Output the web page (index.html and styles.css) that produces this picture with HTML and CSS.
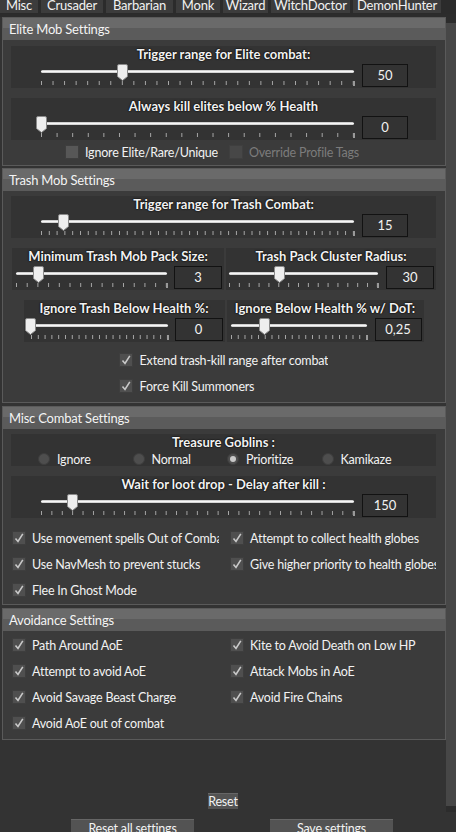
FILE: index.html
```html
<!DOCTYPE html>
<html>
<head>
<meta charset="utf-8">
<link rel="stylesheet" href="styles.css">
</head>
<body>
<div class="tabs">
  <div class="tab t1"><span>Misc</span></div>
  <div class="tab t2"><span>Crusader</span></div>
  <div class="tab t3"><span>Barbarian</span></div>
  <div class="tab t4"><span>Monk</span></div>
  <div class="tab t5"><span>Wizard</span></div>
  <div class="tab t6"><span>WitchDoctor</span></div>
  <div class="tab t7"><span>DemonHunter</span></div>
</div>
<div class="main">
  <div class="scroll">
    <section class="group g1">
      <div class="ghead">Elite Mob Settings</div>
      <div class="gbody">
        <div class="panel">
          <div class="plabel">Trigger range for Elite combat:</div>
          <div class="prow full">
            <div class="slider" style="--n:27"><i class="track"></i><i class="ticks"></i><svg class="thumb" style="left:76px" width="11" height="17" viewBox="0 0 11 17"><path d="M2 .5h7a1.5 1.5 0 0 1 1.5 1.5v10.5L5.5 16.5.5 12.5V2A1.5 1.5 0 0 1 2 .5z"/></svg></div>
            <div class="val">50</div>
          </div>
        </div>
        <div class="panel">
          <div class="plabel">Always kill elites below % Health</div>
          <div class="prow full">
            <div class="slider" style="--n:20"><i class="track"></i><i class="ticks"></i><svg class="thumb" style="left:-5px" width="11" height="17" viewBox="0 0 11 17"><path d="M2 .5h7a1.5 1.5 0 0 1 1.5 1.5v10.5L5.5 16.5.5 12.5V2A1.5 1.5 0 0 1 2 .5z"/></svg></div>
            <div class="val">0</div>
          </div>
        </div>
        <div class="cbpair">
          <label class="cb off"><span class="box"></span>Ignore Elite/Rare/Unique</label>
          <label class="cb disabled"><span class="box"></span>Override Profile Tags</label>
        </div>
      </div>
    </section>

    <section class="group g2">
      <div class="ghead">Trash Mob Settings</div>
      <div class="gbody">
        <div class="panel">
          <div class="plabel">Trigger range for Trash Combat:</div>
          <div class="prow full">
            <div class="slider" style="--n:40"><i class="track"></i><i class="ticks"></i><svg class="thumb" style="left:17px" width="11" height="17" viewBox="0 0 11 17"><path d="M2 .5h7a1.5 1.5 0 0 1 1.5 1.5v10.5L5.5 16.5.5 12.5V2A1.5 1.5 0 0 1 2 .5z"/></svg></div>
            <div class="val">15</div>
          </div>
        </div>
        <div class="halfrow r1">
          <div class="panel half h1">
            <div class="plabel">Minimum Trash Mob Pack Size:</div>
            <div class="prow">
              <div class="slider" style="--n:14"><i class="track"></i><i class="ticks"></i><svg class="thumb" style="left:17px" width="11" height="17" viewBox="0 0 11 17"><path d="M2 .5h7a1.5 1.5 0 0 1 1.5 1.5v10.5L5.5 16.5.5 12.5V2A1.5 1.5 0 0 1 2 .5z"/></svg></div>
              <div class="val">3</div>
            </div>
          </div>
          <div class="panel half h2">
            <div class="plabel">Trash Pack Cluster Radius:</div>
            <div class="prow">
              <div class="slider" style="--n:15"><i class="track"></i><i class="ticks"></i><svg class="thumb" style="left:45px" width="11" height="17" viewBox="0 0 11 17"><path d="M2 .5h7a1.5 1.5 0 0 1 1.5 1.5v10.5L5.5 16.5.5 12.5V2A1.5 1.5 0 0 1 2 .5z"/></svg></div>
              <div class="val">30</div>
            </div>
          </div>
        </div>
        <div class="halfrow r2">
          <div class="panel half h3">
            <div class="plabel">Ignore Trash Below Health %:</div>
            <div class="prow">
              <div class="slider" style="--n:20"><i class="track"></i><i class="ticks"></i><svg class="thumb" style="left:-6px" width="11" height="17" viewBox="0 0 11 17"><path d="M2 .5h7a1.5 1.5 0 0 1 1.5 1.5v10.5L5.5 16.5.5 12.5V2A1.5 1.5 0 0 1 2 .5z"/></svg></div>
              <div class="val">0</div>
            </div>
          </div>
          <div class="panel half h4">
            <div class="plabel">Ignore Below Health % w/ DoT:</div>
            <div class="prow">
              <div class="slider" style="--n:20"><i class="track"></i><i class="ticks"></i><svg class="thumb" style="left:28px" width="11" height="17" viewBox="0 0 11 17"><path d="M2 .5h7a1.5 1.5 0 0 1 1.5 1.5v10.5L5.5 16.5.5 12.5V2A1.5 1.5 0 0 1 2 .5z"/></svg></div>
              <div class="val">0,25</div>
            </div>
          </div>
        </div>
        <div class="cbstack">
          <label class="cb"><span class="box"><svg width="12" height="12" viewBox="0 0 12 12"><path d="M2.5 6.5 5 9.5 9.8 1.8"/></svg></span>Extend trash-kill range after combat</label>
          <label class="cb"><span class="box"><svg width="12" height="12" viewBox="0 0 12 12"><path d="M2.5 6.5 5 9.5 9.8 1.8"/></svg></span>Force Kill Summoners</label>
        </div>
      </div>
    </section>

    <section class="group g3">
      <div class="ghead">Misc Combat Settings</div>
      <div class="gbody">
        <div class="panel goblins">
          <div class="plabel">Treasure Goblins :</div>
          <div class="radios">
            <label class="rb"><span class="dot"></span>Ignore</label>
            <label class="rb"><span class="dot"></span>Normal</label>
            <label class="rb on"><span class="dot"></span>Prioritize</label>
            <label class="rb"><span class="dot"></span>Kamikaze</label>
          </div>
        </div>
        <div class="panel">
          <div class="plabel">Wait for loot drop - Delay after kill :</div>
          <div class="prow full">
            <div class="slider" style="--n:30"><i class="track"></i><i class="ticks"></i><svg class="thumb" style="left:26px" width="11" height="17" viewBox="0 0 11 17"><path d="M2 .5h7a1.5 1.5 0 0 1 1.5 1.5v10.5L5.5 16.5.5 12.5V2A1.5 1.5 0 0 1 2 .5z"/></svg></div>
            <div class="val">150</div>
          </div>
        </div>
        <div class="cbgrid">
          <label class="cb"><span class="box"><svg width="12" height="12" viewBox="0 0 12 12"><path d="M2.5 6.5 5 9.5 9.8 1.8"/></svg></span>Use movement spells Out of Combat</label>
          <label class="cb"><span class="box"><svg width="12" height="12" viewBox="0 0 12 12"><path d="M2.5 6.5 5 9.5 9.8 1.8"/></svg></span>Attempt to collect health globes</label>
          <label class="cb"><span class="box"><svg width="12" height="12" viewBox="0 0 12 12"><path d="M2.5 6.5 5 9.5 9.8 1.8"/></svg></span>Use NavMesh to prevent stucks</label>
          <label class="cb"><span class="box"><svg width="12" height="12" viewBox="0 0 12 12"><path d="M2.5 6.5 5 9.5 9.8 1.8"/></svg></span>Give higher priority to health globes</label>
          <label class="cb"><span class="box"><svg width="12" height="12" viewBox="0 0 12 12"><path d="M2.5 6.5 5 9.5 9.8 1.8"/></svg></span>Flee In Ghost Mode</label>
        </div>
      </div>
    </section>

    <section class="group g4">
      <div class="ghead">Avoidance Settings</div>
      <div class="gbody">
        <div class="cbgrid">
          <label class="cb"><span class="box"><svg width="12" height="12" viewBox="0 0 12 12"><path d="M2.5 6.5 5 9.5 9.8 1.8"/></svg></span>Path Around AoE</label>
          <label class="cb"><span class="box"><svg width="12" height="12" viewBox="0 0 12 12"><path d="M2.5 6.5 5 9.5 9.8 1.8"/></svg></span>Kite to Avoid Death on Low HP</label>
          <label class="cb"><span class="box"><svg width="12" height="12" viewBox="0 0 12 12"><path d="M2.5 6.5 5 9.5 9.8 1.8"/></svg></span>Attempt to avoid AoE</label>
          <label class="cb"><span class="box"><svg width="12" height="12" viewBox="0 0 12 12"><path d="M2.5 6.5 5 9.5 9.8 1.8"/></svg></span>Attack Mobs in AoE</label>
          <label class="cb"><span class="box"><svg width="12" height="12" viewBox="0 0 12 12"><path d="M2.5 6.5 5 9.5 9.8 1.8"/></svg></span>Avoid Savage Beast Charge</label>
          <label class="cb"><span class="box"><svg width="12" height="12" viewBox="0 0 12 12"><path d="M2.5 6.5 5 9.5 9.8 1.8"/></svg></span>Avoid Fire Chains</label>
          <label class="cb"><span class="box"><svg width="12" height="12" viewBox="0 0 12 12"><path d="M2.5 6.5 5 9.5 9.8 1.8"/></svg></span>Avoid AoE out of combat</label>
        </div>
      </div>
    </section>

    <div class="spacer"></div>
    <div class="resetrow"><button class="btn small">Reset</button></div>
  </div>
  <div class="sbar">
    <div class="arrow up"></div>
    <div class="sthumb"></div>
    <div class="arrow down"></div>
  </div>
</div>
<div class="footer">
  <button class="btn wide">Reset all settings</button>
  <button class="btn wide">Save settings</button>
</div>
</body>
</html>
```

FILE: styles.css
```css
* { box-sizing: border-box; }
html, body { margin: 0; padding: 0; }
body {
  width: 456px;
  height: 832px;
  overflow: hidden;
  background: #333333;
  font-family: Lato, "Noto Sans", sans-serif;
  font-size: 12.5px;
  letter-spacing: -0.2px;
  color: #f2f2f2;
}

/* tabs */
.tabs {
  display: flex;
  gap: 3px;
  height: 14px;
  background: #2b2b2b;
  overflow: hidden;
}
.tab {
  flex: none;
  height: 13px;
  background: #3c3c3c;
  text-align: center;
  overflow: hidden;
  font-size: 13px;
}
.tab span { display: block; margin-top: -4px; line-height: 18px; white-space: nowrap; }
.t1 { width: 38px; }
.t2 { width: 62px; }
.t3 { width: 67px; }
.t4 { width: 44px; }
.t5 { width: 45px; }
.t6 { width: 79px; }
.t7 { width: 88px; }

/* main area */
.main {
  display: flex;
  height: 798px;
  padding-top: 3px;
  background: #2c2c2c;
}
.scroll {
  width: 446px;
  padding-left: 2px;
  display: flex;
  flex-direction: column;
  background: #333333;
}
.group {
  border: 1px solid #5a5a5a;
  background: #3b3b3b;
  margin-bottom: 3px;
}
.g1 { margin-bottom: 2px; }
.ghead {
  height: 22px;
  line-height: 22px;
  padding-left: 6px;
  background: linear-gradient(#6a6a6a 0 10px, #5b5b5b 10px);
  color: #f4f4f4;
  font-size: 13px;
}
.gbody { padding: 5px 9px 0 8px; }
.g1 .gbody { padding-top: 6px; }
.g4 .gbody { padding-top: 1px; padding-bottom: 2px; }

/* panels */
.panel {
  background: #333333;
  padding: 1px 0 1px;
  margin-bottom: 10px;
}
.plabel {
  height: 15px;
  line-height: 15px;
  font-size: 13px;
  letter-spacing: 0;
  font-weight: 700;
  text-align: center;
  white-space: nowrap;
  margin-bottom: 2px;
  text-shadow: 0 0 2px #000, 0 0 1px #000;
}
.prow {
  display: flex;
  align-items: flex-start;
  gap: 8px;
}
.prow.full { padding: 0 28px 0 30px; }
.slider {
  flex: 1;
  position: relative;
  height: 22px;
}
.track {
  display: block;
  margin-top: 6px;
  height: 3px;
  border-radius: 2px;
  background: linear-gradient(#bdbdbd, #f6f6f6 50%, #c4c4c4);
}
.ticks {
  display: block;
  position: relative;
  margin-top: 8px;
  height: 4px;
  background: linear-gradient(to right, #a8a8a8 1px, transparent 1px) 0 0 / calc((100% - 1px) / var(--n)) 100% repeat-x;
}
.ticks::after {
  content: "";
  position: absolute;
  right: -1px;
  top: 0;
  width: 2px;
  height: 5px;
  background: #9a9a9a;
}
.thumb {
  position: absolute;
  top: 0;
}
.thumb path {
  fill: #eeeeee;
  stroke: #8a8a8a;
  stroke-width: 1;
}
.val {
  flex: none;
  width: 46px;
  height: 23px;
  line-height: 21px;
  border: 1px solid #121212;
  background: #333333;
  text-align: center;
  font-size: 13px;
  letter-spacing: 0;
}

/* half panels */
.halfrow { display: flex; gap: 2px; justify-content: center; }
.h1 { width: 212px; margin-left: 1px; }
.h2 { width: 210px; }
.h3 { width: 201px; }
.h4 { width: 197px; }
.half .prow { padding-right: 2px; gap: 7px; }
.h1 .prow { padding-left: 4px; }
.h2 .prow { padding-left: 3px; gap: 8px; }
.h3 .prow { padding-left: 7px; }
.h4 .prow { padding-left: 4px; gap: 8px; }
.half .val { width: 48px; }
.h4 .val { width: 47px; }
.r2 { margin-bottom: -5px; }

/* checkboxes */
.cb {
  display: flex;
  align-items: center;
  height: 26px;
  white-space: nowrap;
  overflow: hidden;
}
.box {
  flex: none;
  width: 14px;
  height: 14px;
  margin-right: 6px;
  border: 1px solid #3e3e3e;
  background: #4f4f4f;
  display: flex;
  align-items: center;
  justify-content: center;
}
.box svg path {
  fill: none;
  stroke: #c9c9c9;
  stroke-width: 1.6;
}
.cb.off .box { background: #575757; }
.cb.disabled { color: #7c7c7c; }
.cb.disabled .box { background: #474747; border-color: #3f3f3f; }

.cbpair {
  display: grid;
  grid-template-columns: 212px 1fr;
  height: 24px;
  margin-top: -10px;
  margin-bottom: 1px;
}
.cbpair .cb { height: 24px; }
.cbpair .cb:first-child { justify-self: end; margin-right: 5px; }
.cbpair .cb:last-child { margin-left: 6px; }

.cbstack {
  width: max-content;
  margin: 0 auto 3px;
}
.cbstack .box { margin-right: 7px; }

.cbgrid {
  display: grid;
  grid-template-columns: 207px 1fr;
  column-gap: 11px;
  padding-left: 1px;
  margin-top: -3px;
  padding-bottom: 1px;
}
.g4 .cbgrid { margin-top: 0; }

/* radios */
.goblins { padding-bottom: 0; }
.radios {
  display: grid;
  grid-template-columns: repeat(4, 94.5px);
  padding-left: 27px;
  height: 14px;
}
.rb {
  display: flex;
  align-items: center;
  height: 14px;
  white-space: nowrap;
}
.dot {
  flex: none;
  width: 12px;
  height: 12px;
  border-radius: 50%;
  background: #4e4e4e;
  border: 1px solid #3e3e3e;
  margin-right: 7px;
  display: flex;
  align-items: center;
  justify-content: center;
}
.rb.on .dot::after {
  content: "";
  width: 6px;
  height: 6px;
  border-radius: 50%;
  background: #c8c8c8;
}

/* bottom */
.spacer { flex: 1; }
.resetrow { display: flex; justify-content: center; padding-right: 2px; margin-bottom: 3px; }
.btn {
  font-family: Lato, "Noto Sans", sans-serif;
  font-size: 12.5px;
  letter-spacing: -0.2px;
  color: #f2f2f2;
  background: #535353;
  border: none;
  border-top: 1px solid #666;
  padding: 0;
}
.btn.small { width: 30px; height: 16px; line-height: 14px; }

.sbar {
  width: 10px;
  display: flex;
  flex-direction: column;
  background: #2c2c2c;
}
.arrow { height: 6px; flex: none; }
.sthumb { flex: 1; background: #474747; }

.footer {
  display: flex;
  gap: 76px;
  padding: 7px 0 0 71px;
  height: 20px;
  background: #333333;
}
.btn.wide { width: 123px; height: 18px; line-height: 16px; }
```
